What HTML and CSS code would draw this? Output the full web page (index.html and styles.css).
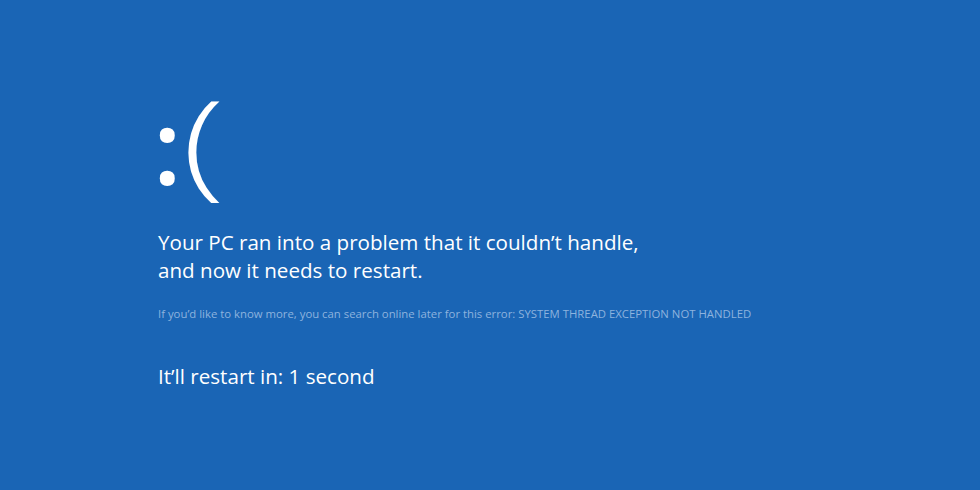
FILE: index.html
```html
<!DOCTYPE html>
<html lang="en">
<head>
<meta charset="utf-8">
<title>Blue screen</title>
<link rel="stylesheet" href="styles.css">
</head>
<body>
<main class="screen">
  <div class="face"><span class="colon">:</span><span class="paren">(</span></div>
  <p class="message">Your PC ran into a problem that it couldn’t handle,<br>and now it needs to restart.</p>
  <p class="info">If you’d like to know more, you can search online later for this error: SYSTEM THREAD EXCEPTION NOT HANDLED</p>
  <p class="restart">It’ll restart in: 1 second</p>
</main>
</body>
</html>
```
FILE: styles.css
```css
html, body {
  margin: 0;
  padding: 0;
  background: #1a65b5;
}
.screen {
  width: 980px;
  height: 490px;
  box-sizing: border-box;
  padding: 65px 0 0 158px;
  display: flex;
  flex-direction: column;
  color: #ffffff;
  font-family: "Open Sans", "Noto Sans", sans-serif;
}
.face {
  font-size: 116px;
  font-weight: 300;
  line-height: 150px;
  height: 150px;
  margin: 0 0 5px;
  white-space: nowrap;
}
.colon {
  font-size: 104px;
  font-weight: 600;
  margin-left: -5px;
  margin-right: 0;
}
.paren {
  display: inline-block;
  transform: scaleX(1.35);
  transform-origin: left center;
}
.message {
  margin: 8px 0 0;
  font-size: 20.6px;
  line-height: 28px;
}
.info {
  margin: 22px 0 0;
  font-size: 11.35px;
  line-height: 16px;
  color: #8db3de;
}
.restart {
  margin: 40px 0 0;
  font-size: 20.6px;
  line-height: 28px;
}
```
